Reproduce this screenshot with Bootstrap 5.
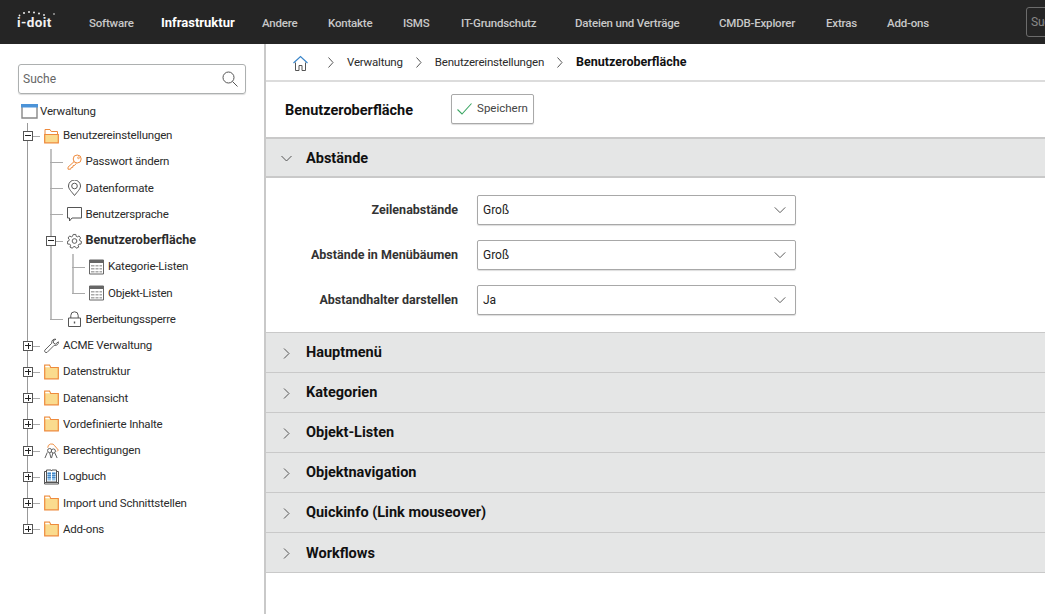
<!DOCTYPE html>
<html lang="de">
<head>
<meta charset="utf-8">
<title>Benutzeroberfläche</title>
<link href="https://cdn.jsdelivr.net/npm/bootstrap@5.3.0/dist/css/bootstrap.min.css" rel="stylesheet">
<style>
html,body{height:100%;overflow:hidden}
body{font-family:Roboto,"Liberation Sans",sans-serif;font-size:11.5px;letter-spacing:-.2px;color:#2b2b2b;background:#fff}
.fw-bold,h1,label,.cur,.sect-head{letter-spacing:0}
.topbar{height:44px;background:#252525;padding:0;flex-wrap:nowrap;overflow:hidden}
.brand-logo{width:89px;flex:none;padding-left:17px;margin:0;color:#f2f2f2;font-weight:700;font-size:13.5px;line-height:1;position:relative;white-space:nowrap;letter-spacing:.4px;top:1px}
.brand-dots{position:absolute;left:17px;top:-6px;width:40px;height:9px}
.top-nav{flex-wrap:nowrap;flex:none;padding-top:1px}
.top-nav .nav-link{padding:0;color:#c8c8c8;font-size:11.5px;line-height:18px;font-weight:500;white-space:nowrap}
.top-nav .nav-link.active{color:#fff;font-weight:700;font-size:13px;letter-spacing:0}
.w72{width:72px}.w101{width:101px}.w66{width:66px}.w75{width:75px}.w58{width:58px}.w114{width:114px}.w144{width:144px}.w107{width:107px}.w61{width:61px}.w139{width:139px}
.top-search{width:60px;height:30px;border:1px solid #6c6c6c;border-radius:3px;color:#888;padding:0 4px;font-size:12px;line-height:28px;flex:none;overflow:hidden;white-space:nowrap}
.shell{height:570px}
.side-col{width:266px;flex:none;border-right:2px solid #c9c9c9;padding:20px 18px 0;overflow:hidden}
.main-col{flex:1;min-width:0}
.side-search{height:30px;border:1px solid #adb0b0;border-radius:3px;padding:0 7px 0 4px;font-size:12px;letter-spacing:0;color:#666;box-shadow:0 1px 1px #ddd}
.tree-root{height:23.5px;margin-top:5px;padding:2px 0 0 3px;gap:2px}
.tree-root .tic{width:17px;height:15px}
.tlist{list-style:none;margin:0;padding:0}
.tlist.lv1{margin-left:9px}
.tlist.lv2,.tlist.lv3{margin-left:5.5px}
.tnode{position:relative;padding-left:17px}
.tnode::before{content:"";position:absolute;left:0;top:0;bottom:0;border-left:1px solid #999}
.tnode:last-child::before{bottom:auto;height:13px}
.lv2>.tnode::before,.lv3>.tnode::before{border-left:2px solid #c2c2c2}
.tnode::after{content:"";position:absolute;left:0;top:13px;width:13px;border-top:1px solid #aaa}
.trow{height:26.25px;gap:4px;white-space:nowrap;color:#2b2b2b}
.trow .fw-bold{font-size:12.5px}
.tic{width:15px;height:16px;flex:none}
.tbox{position:absolute;left:-4px;top:8px;width:10px;height:10px;border:1px solid #555;background:#fff;z-index:1}
.tbox::before{content:"";position:absolute;left:1px;right:1px;top:3.5px;border-top:1px solid #222}
.tbox.plus::after{content:"";position:absolute;top:1px;bottom:1px;left:3.5px;border-left:1px solid #222}
.crumbs{height:38px;border-bottom:2px solid #dcdcdc;padding:1px 0 0 27px;white-space:nowrap}
.crumbs .hm{width:15px;height:16px;margin-right:19px}
.crumbs .sep{width:7px;height:11px;margin:0 13px 0 0;flex:none}
.crumbs .cr{margin-right:12px;color:#2b2b2b}
.crumbs .cr.cur{font-weight:700;color:#111;font-size:12.5px}
.title-row{height:55px;padding-left:19px}
.title-row h1{font-size:14.500px;font-weight:700;margin:2px 0 0;width:166px;color:#111}
.save-btn{height:30px;width:83px;padding:0;margin-bottom:2px;border:1px solid #a9a9a9;border-radius:2px;background:#fff;color:#444;font-size:11.5px;gap:5px;box-shadow:0 1px 1px #ddd;--bs-btn-hover-bg:#fff}
.save-btn span{padding-top:1px}
.sect-list{--bs-accordion-border-width:0;--bs-accordion-border-radius:0;--bs-accordion-inner-border-radius:0}
.sect-list .accordion-item{border:0;background:#fff}
.sect-head{height:40px;padding:1px 0 0 15px;background:#e5e6e6!important;color:#111!important;font-weight:700;font-size:14.500px;border-top:1px solid #c9c9c9;box-shadow:none!important;width:100%}
.sect-head::after{display:none}
.sect-head .chev{width:11px;height:11px;margin-right:14px;flex:none}
.sect-list .accordion-item:last-child .sect-head{height:41px;border-bottom:1px solid #c9c9c9;padding-top:2px}
.sect-open .sect-head{height:41px;padding-top:2px;border-top-width:2px;border-bottom:2px solid #c9c9c9}
.sect-body{height:154px;padding:17px 0 0}
.frow{height:30px;margin-bottom:15px}
.frow label{width:192px;text-align:right;font-size:12.5px;font-weight:700;color:#333;margin:0 19px 0 0;flex:none}
.frow .form-select{width:319px;height:30px;padding:0 20px 0 5px;font-size:12px;letter-spacing:0;color:#222;border:1px solid #a8a8a8;border-radius:2px;box-shadow:0 1px 1px #ddd;background-position:right 8px center;background-size:14px 14px;background-image:url("data:image/svg+xml,%3csvg xmlns='http://www.w3.org/2000/svg' viewBox='0 0 16 16'%3e%3cpath fill='none' stroke='%23555' stroke-width='1.1' d='M2 5l6 6 6-6'/%3e%3c/svg%3e")}
</style>
</head>
<body>
<svg width="0" height="0" class="d-none">
<defs>
<symbol id="i-folder" viewBox="0 0 15 16"><path d="M.7 3.500V1.200h4.800l1.200 2.300h7.600v11.300H.7z" fill="#fadb8e" stroke="#ee8a3c" stroke-width="1.200"/><path d="M1.300 1.800h3.900l.8 1.500H1.300z" fill="#fff"/></symbol>
<symbol id="i-folder-open" viewBox="0 0 15 16"><path d="M1 14.500V1.500h5l1.200 2h6.300V6" fill="#fff" stroke="#ee8a3c"/><path d="M.7 6.500h13.600v8.300H.7z" fill="#fadb8e" stroke="#ee8a3c" stroke-width="1.200"/></symbol>
<symbol id="i-key" viewBox="0 0 15 16"><circle cx="10.200" cy="5" r="4" fill="#fff" stroke="#ee8a3c"/><circle cx="11.500" cy="3.800" r=".9" fill="none" stroke="#ee8a3c" stroke-width=".8"/><path d="M7.200 7.500L1 13.200v2h2.600l.6-1.600 1.600-.3.2-1.600 1.500-.2 1.800-2.200" fill="none" stroke="#ee8a3c"/></symbol>
<symbol id="i-pin" viewBox="0 0 15 16"><path d="M7.500 15.500C4.500 11.500 1.500 9 1.500 6a6 6 0 0 1 12 0c0 3-3 5.500-6 9.500z" fill="none" stroke="#555"/><circle cx="7.500" cy="6" r="2.800" fill="none" stroke="#555"/></symbol>
<symbol id="i-chat" viewBox="0 0 15 16"><path d="M.5 1.500h14v10.500H5L2.500 15v-3h-2z" fill="none" stroke="#555"/></symbol>
<symbol id="i-gear" viewBox="0 0 16 16"><path d="M6.600 1h2.800l.4 2 1.300.6 1.800-1 1.700 2.200-1.300 1.500.3 1.400 1.900.9-.6 2.700-2.100 0-.9 1.200.6 2-2.500 1.200-1.300-1.700H7l-1.300 1.700-2.500-1.200.6-2-.9-1.200-2.100 0-.6-2.700 1.900-.9.300-1.400L1.100 4.800l1.700-2.200 1.800 1 1.300-.6z" fill="none" stroke="#555"/><circle cx="8" cy="8" r="2.500" fill="none" stroke="#555"/></symbol>
<symbol id="i-table" viewBox="0 0 15 16"><path d="M.5 1h14v14H.5z" fill="#fff" stroke="#666"/><path d="M0 1h15v3H0z" fill="#666"/><path d="M2 6h3.500v1.500H2zM6.500 6h3v1.500h-3zM10.500 6H13v1.500h-2.500zM2 9h3.500v1.500H2zM6.500 9h3v1.500h-3zM10.500 9H13v1.500h-2.500zM2 12h3.500v1.500H2zM6.500 12h3v1.500h-3zM10.500 12H13v1.500h-2.500z" fill="#aaa"/></symbol>
<symbol id="i-lock" viewBox="0 0 15 16"><path d="M1.500 7h12v8.500h-12z" fill="none" stroke="#555"/><path d="M3.800 7V4.500a3.700 3.700 0 0 1 7.400 0V7" fill="none" stroke="#555"/><path d="M6.800 10.500h1.400v2H6.800z" fill="#555"/></symbol>
<symbol id="i-wrench" viewBox="0 0 16 16"><path d="M15.300 3.500l-3 2.500-2.200-1.200-.2-2.500L12.800.8C10 .2 7.800 2 8.300 5L.8 12.500c-.8 1.500 1 3.200 2.500 2.300L10.800 7.300c3 .5 5-1.300 4.500-3.800z" fill="#fff" stroke="#555"/></symbol>
<symbol id="i-users" viewBox="0 0 16 16"><path d="M4 4.500a4 4 0 0 1 7.500-2l3.800 4.500-1.500 1.500" fill="none" stroke="#ee8a3c"/><circle cx="6" cy="7.500" r="2.200" fill="#fff" stroke="#555"/><circle cx="10" cy="8" r="2.200" fill="#fff" stroke="#555"/><path d="M1 15.500l2.500-6M7.500 15.500L6 10M8 15.500l1.500-5.500M14 15.500l-2.500-5.500" fill="none" stroke="#555"/></symbol>
<symbol id="i-book" viewBox="0 0 15 16"><path d="M.5 2.500h2v11h-2zM12.500 2.500h2v11h-2zM.5 13.500h14V15H.5z" fill="#fff" stroke="#555"/><path d="M2.500 1h4.500l.5 1 .5-1h4.500v12H2.500z" fill="#fff" stroke="#555"/><path d="M3.500 3H7v8.500H3.500zM8 3h3.500v8.500H8z" fill="#8fc1ea"/><path d="M3.500 4.500h3.500M3.500 6.500h3.500M3.500 8.500h3.500M8 4.500h3.500M8 6.500h3.500M8 8.500h3.500" stroke="#2a6fb4" stroke-width=".7"/></symbol>
<symbol id="i-window" viewBox="0 0 17 15"><path d="M1 1h15v13H1z" fill="#fff" stroke="#888" stroke-width="1.400"/><path d="M0 0h17v3.500H0z" fill="#4b93d8"/></symbol>
<symbol id="i-home" viewBox="0 0 15 16"><path d="M.5 8L7.500 1.500 14.500 8" fill="none" stroke="#3a85c9" stroke-width="1.200"/><path d="M2.500 7.500v8h3.500v-5h3v5h3.500v-8" fill="none" stroke="#555"/></symbol>
<symbol id="i-right" viewBox="0 0 7 11"><path d="M1.500 .5l4.500 5-4.500 5" fill="none" stroke="#555"/></symbol>
<symbol id="i-down" viewBox="0 0 11 11"><path d="M.5 3l5 5 5-5" fill="none" stroke="#555"/></symbol>
<symbol id="i-side" viewBox="0 0 11 11"><path d="M3 .5l5 5-5 5" fill="none" stroke="#555"/></symbol>
<symbol id="i-search" viewBox="0 0 16 16"><circle cx="6.500" cy="6.500" r="5.500" fill="none" stroke="#555"/><path d="M10.500 10.500l5 5" stroke="#555"/></symbol>
<symbol id="i-check" viewBox="0 0 15 12"><path d="M.5 6.500l4.500 4.500L14.500.5" fill="none" stroke="#3aa663" stroke-width="1.100"/></symbol>
</defs>
</svg>

<nav class="navbar topbar d-flex align-items-center justify-content-start">
  <div class="brand-logo"><svg class="brand-dots" viewBox="0 0 40 9"><g fill="#eee"><circle cx="2.500" cy="5.500" r=".9"/><circle cx="7" cy="3" r="1"/><circle cx="12" cy="2" r="1"/><circle cx="17" cy="2.500" r="1"/><circle cx="22" cy="3.500" r="1"/><circle cx="27" cy="5" r=".9"/><circle cx="37" cy="4" r=".8"/></g></svg>i-doit</div>
  <ul class="nav top-nav align-items-center">
    <li class="nav-item w72"><a class="nav-link" href="#">Software</a></li>
    <li class="nav-item w101"><a class="nav-link active" href="#">Infrastruktur</a></li>
    <li class="nav-item w66"><a class="nav-link" href="#">Andere</a></li>
    <li class="nav-item w75"><a class="nav-link" href="#">Kontakte</a></li>
    <li class="nav-item w58"><a class="nav-link" href="#">ISMS</a></li>
    <li class="nav-item w114"><a class="nav-link" href="#">IT-Grundschutz</a></li>
    <li class="nav-item w144"><a class="nav-link" href="#">Dateien und Verträge</a></li>
    <li class="nav-item w107"><a class="nav-link" href="#">CMDB-Explorer</a></li>
    <li class="nav-item w61"><a class="nav-link" href="#">Extras</a></li>
    <li class="nav-item w139"><a class="nav-link" href="#">Add-ons</a></li>
  </ul>
  <div class="top-search">Suche</div>
</nav>

<div class="d-flex shell">
  <aside class="side-col">
    <div class="side-search d-flex align-items-center justify-content-between">
      <span>Suche</span>
      <svg width="16" height="16"><use href="#i-search"/></svg>
    </div>
    <div class="tree-root d-flex align-items-center"><svg class="tic"><use href="#i-window"/></svg><span>Verwaltung</span></div>
    <ul class="tlist lv1">
      <li class="tnode"><span class="tbox"></span>
        <div class="trow d-flex align-items-center"><svg class="tic"><use href="#i-folder-open"/></svg><span>Benutzereinstellungen</span></div>
        <ul class="tlist lv2">
          <li class="tnode"><div class="trow d-flex align-items-center"><svg class="tic"><use href="#i-key"/></svg><span>Passwort ändern</span></div></li>
          <li class="tnode"><div class="trow d-flex align-items-center"><svg class="tic"><use href="#i-pin"/></svg><span>Datenformate</span></div></li>
          <li class="tnode"><div class="trow d-flex align-items-center"><svg class="tic"><use href="#i-chat"/></svg><span>Benutzersprache</span></div></li>
          <li class="tnode"><span class="tbox"></span>
            <div class="trow d-flex align-items-center"><svg class="tic"><use href="#i-gear"/></svg><span class="fw-bold">Benutzeroberfläche</span></div>
            <ul class="tlist lv3">
              <li class="tnode"><div class="trow d-flex align-items-center"><svg class="tic"><use href="#i-table"/></svg><span>Kategorie-Listen</span></div></li>
              <li class="tnode"><div class="trow d-flex align-items-center"><svg class="tic"><use href="#i-table"/></svg><span>Objekt-Listen</span></div></li>
            </ul>
          </li>
          <li class="tnode"><div class="trow d-flex align-items-center"><svg class="tic"><use href="#i-lock"/></svg><span>Berbeitungssperre</span></div></li>
        </ul>
      </li>
      <li class="tnode"><span class="tbox plus"></span><div class="trow d-flex align-items-center"><svg class="tic"><use href="#i-wrench"/></svg><span>ACME Verwaltung</span></div></li>
      <li class="tnode"><span class="tbox plus"></span><div class="trow d-flex align-items-center"><svg class="tic"><use href="#i-folder"/></svg><span>Datenstruktur</span></div></li>
      <li class="tnode"><span class="tbox plus"></span><div class="trow d-flex align-items-center"><svg class="tic"><use href="#i-folder"/></svg><span>Datenansicht</span></div></li>
      <li class="tnode"><span class="tbox plus"></span><div class="trow d-flex align-items-center"><svg class="tic"><use href="#i-folder"/></svg><span>Vordefinierte Inhalte</span></div></li>
      <li class="tnode"><span class="tbox plus"></span><div class="trow d-flex align-items-center"><svg class="tic"><use href="#i-users"/></svg><span>Berechtigungen</span></div></li>
      <li class="tnode"><span class="tbox plus"></span><div class="trow d-flex align-items-center"><svg class="tic"><use href="#i-book"/></svg><span>Logbuch</span></div></li>
      <li class="tnode"><span class="tbox plus"></span><div class="trow d-flex align-items-center"><svg class="tic"><use href="#i-folder"/></svg><span>Import und Schnittstellen</span></div></li>
      <li class="tnode"><span class="tbox plus"></span><div class="trow d-flex align-items-center"><svg class="tic"><use href="#i-folder"/></svg><span>Add-ons</span></div></li>
    </ul>
  </aside>
  <main class="main-col">
    <div class="crumbs d-flex align-items-center">
      <svg class="hm"><use href="#i-home"/></svg>
      <svg class="sep"><use href="#i-right"/></svg><span class="cr">Verwaltung</span>
      <svg class="sep"><use href="#i-right"/></svg><span class="cr">Benutzereinstellungen</span>
      <svg class="sep"><use href="#i-right"/></svg><span class="cr cur">Benutzeroberfläche</span>
    </div>
    <div class="title-row d-flex align-items-center">
      <h1>Benutzeroberfläche</h1>
      <button type="button" class="btn save-btn d-inline-flex align-items-center justify-content-center"><svg width="15" height="12"><use href="#i-check"/></svg><span>Speichern</span></button>
    </div>
    <div class="accordion sect-list">
      <div class="accordion-item sect-open">
        <button class="accordion-button sect-head d-flex align-items-center" type="button"><svg class="chev"><use href="#i-down"/></svg>Abstände</button>
        <div class="sect-body">
          <div class="frow d-flex align-items-center"><label>Zeilenabstände</label><select class="form-select"><option>Groß</option></select></div>
          <div class="frow d-flex align-items-center"><label>Abstände in Menübäumen</label><select class="form-select"><option>Groß</option></select></div>
          <div class="frow d-flex align-items-center"><label>Abstandhalter darstellen</label><select class="form-select"><option>Ja</option></select></div>
        </div>
      </div>
      <div class="accordion-item"><button class="accordion-button collapsed sect-head d-flex align-items-center" type="button"><svg class="chev"><use href="#i-side"/></svg>Hauptmenü</button></div>
      <div class="accordion-item"><button class="accordion-button collapsed sect-head d-flex align-items-center" type="button"><svg class="chev"><use href="#i-side"/></svg>Kategorien</button></div>
      <div class="accordion-item"><button class="accordion-button collapsed sect-head d-flex align-items-center" type="button"><svg class="chev"><use href="#i-side"/></svg>Objekt-Listen</button></div>
      <div class="accordion-item"><button class="accordion-button collapsed sect-head d-flex align-items-center" type="button"><svg class="chev"><use href="#i-side"/></svg>Objektnavigation</button></div>
      <div class="accordion-item"><button class="accordion-button collapsed sect-head d-flex align-items-center" type="button"><svg class="chev"><use href="#i-side"/></svg>Quickinfo (Link mouseover)</button></div>
      <div class="accordion-item"><button class="accordion-button collapsed sect-head d-flex align-items-center" type="button"><svg class="chev"><use href="#i-side"/></svg>Workflows</button></div>
    </div>
  </main>
</div>
<script src="https://cdn.jsdelivr.net/npm/bootstrap@5.3.0/dist/js/bootstrap.bundle.min.js"></script>
</body>
</html>
